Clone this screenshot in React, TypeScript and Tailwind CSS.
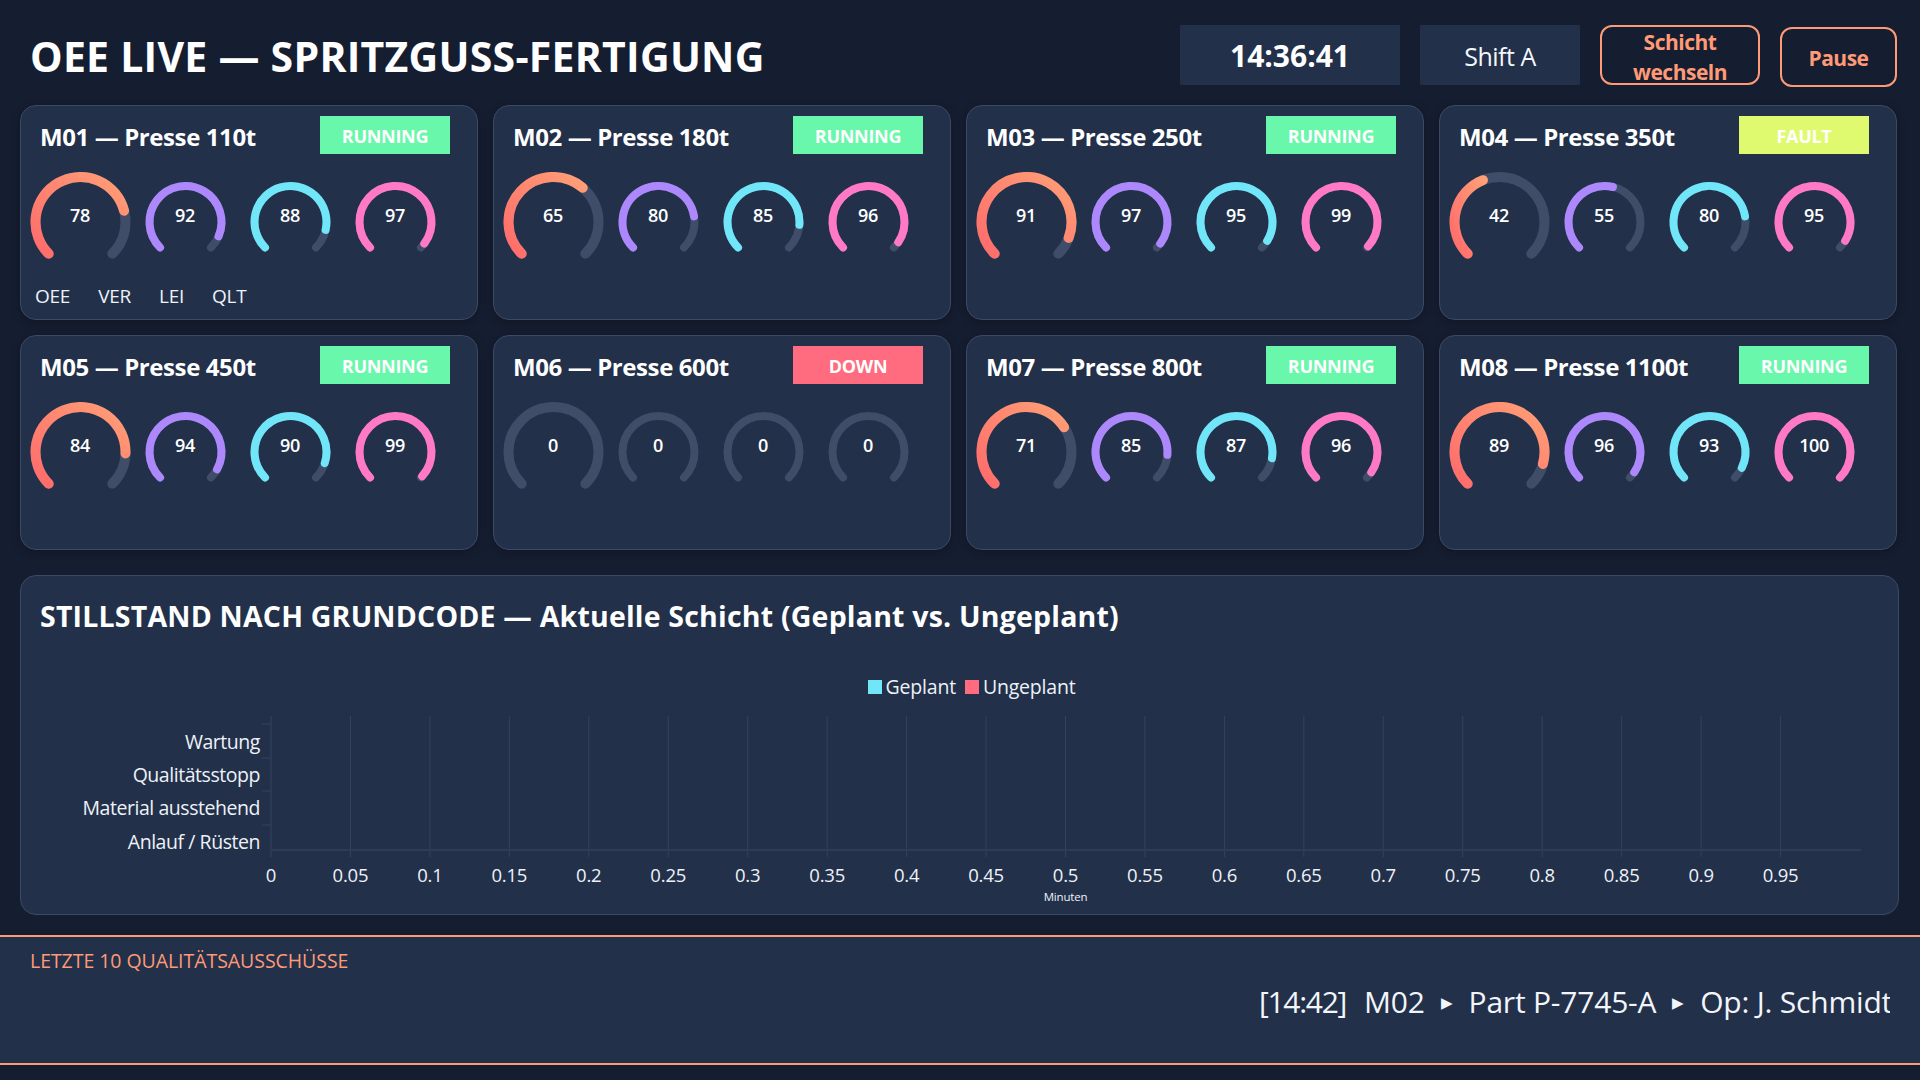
import React from "react";

type Status = "RUNNING" | "FAULT" | "DOWN";
interface Machine { name: string; status: Status; values: [number, number, number, number]; }

const machines: Machine[] = [
  { name: "M01 — Presse 110t", status: "RUNNING", values: [78, 92, 88, 97] },
  { name: "M02 — Presse 180t", status: "RUNNING", values: [65, 80, 85, 96] },
  { name: "M03 — Presse 250t", status: "RUNNING", values: [91, 97, 95, 99] },
  { name: "M04 — Presse 350t", status: "FAULT", values: [42, 55, 80, 95] },
  { name: "M05 — Presse 450t", status: "RUNNING", values: [84, 94, 90, 99] },
  { name: "M06 — Presse 600t", status: "DOWN", values: [0, 0, 0, 0] },
  { name: "M07 — Presse 800t", status: "RUNNING", values: [71, 85, 87, 96] },
  { name: "M08 — Presse 1100t", status: "RUNNING", values: [89, 96, 93, 100] },
];

const badgeClass: Record<Status, string> = {
  RUNNING: "bg-[#69f7ab]",
  FAULT: "bg-[#dffa6f]",
  DOWN: "bg-[#ff6b7f]",
};

const arc = (r: number, pct: number) => {
  const cx = 52.5;
  const cy = 50;
  const start = (225 * Math.PI) / 180;
  const end = ((225 - 270 * pct) * Math.PI) / 180;
  const x1 = cx + r * Math.cos(start);
  const y1 = cy - r * Math.sin(start);
  const x2 = cx + r * Math.cos(end);
  const y2 = cy - r * Math.sin(end);
  const large = 270 * pct > 180 ? 1 : 0;
  return `M ${x1} ${y1} A ${r} ${r} 0 ${large} 1 ${x2} ${y2}`;
};

function Gauge({ value, big, color, id }: { value: number; big?: boolean; color: string; id: string }) {
  const r = big ? 45 : 36;
  const sw = big ? 10 : 8;
  return (
    <svg width="105" height="100" viewBox="0 0 105 100" className="block shrink-0">
      {big && (
        <defs>
          <linearGradient id={id} x1="0" y1="1" x2="1" y2="0">
            <stop offset="0" stopColor="#ff6b6b" />
            <stop offset="1" stopColor="#ff9f76" />
          </linearGradient>
        </defs>
      )}
      <path d={arc(r, 1)} fill="none" stroke="#3f4d69" strokeWidth={sw} strokeLinecap="round" />
      {value > 0 && (
        <path d={arc(r, value / 100)} fill="none" stroke={big ? `url(#${id})` : color} strokeWidth={sw} strokeLinecap="round" />
      )}
      <text x="52" y="50" textAnchor="middle" fill="#ffffff" fontSize="18" fontWeight="600" letterSpacing="-0.4">
        {value}
      </text>
    </svg>
  );
}

function Card({ m, idx }: { m: Machine; idx: number }) {
  return (
    <div className="h-[215px] rounded-[16px] border border-[#3a4966] bg-[#22304a] pl-[19px] pr-[27px] pt-[10px] shadow-[0_2px_8px_rgba(0,0,0,0.25)]">
      <div className="flex h-[38px] items-start justify-between">
        <div className="pt-[5px] text-[24px] font-bold leading-[32px] tracking-[-0.4px] text-white">{m.name}</div>
        <div className={`flex h-[38px] w-[130px] items-center justify-center pt-[1px] text-[18px] font-bold leading-none tracking-[-0.3px] text-white ${badgeClass[m.status]}`}>
          {m.status}
        </div>
      </div>
      <div className="-ml-[12.5px] mt-[18px] flex">
        <Gauge value={m.values[0]} big color="" id={`oee-${idx}`} />
        <Gauge value={m.values[1]} color="#ad88fd" id="" />
        <Gauge value={m.values[2]} color="#70e6f8" id="" />
        <Gauge value={m.values[3]} color="#ff79c6" id="" />
      </div>
      {idx === 0 && (
        <div className="-ml-[5px] mt-[12px] flex gap-[28px] text-[19px] font-normal leading-[24px] tracking-[-0.25px] text-[#eef2f8]">
          <span>OEE</span>
          <span>VER</span>
          <span>LEI</span>
          <span>QLT</span>
        </div>
      )}
    </div>
  );
}

const xTicks = ["0", "0.05", "0.1", "0.15", "0.2", "0.25", "0.3", "0.35", "0.4", "0.45", "0.5", "0.55", "0.6", "0.65", "0.7", "0.75", "0.8", "0.85", "0.9", "0.95"];

function Chart() {
  const ox = 250;
  const step = 79.45;
  const top = 16;
  const axis = 150;
  const cats: [string, number][] = [["Wartung", 49], ["Qualitätsstopp", 82], ["Material ausstehend", 115], ["Anlauf / Rüsten", 149]];
  return (
    <svg width="1877" height="210" viewBox="0 0 1877 210" className="block">
      {xTicks.map((t, i) => (
        <g key={t}>
          <line x1={ox + i * step} x2={ox + i * step} y1={top} y2={axis + 7} stroke="#34425f" strokeWidth="1" />
          <text x={ox + i * step} y={182} textAnchor="middle" fontSize="18.5" fontWeight="400" letterSpacing="-0.2" fill="#eef2f8">{t}</text>
        </g>
      ))}
      <line x1={ox} x2={1840} y1={axis} y2={axis} stroke="#2f3c57" strokeWidth="2" />
      {[24, 58, 91, 125].map((y) => (
        <line key={y} x1={ox - 9} x2={ox} y1={y} y2={y} stroke="#34425f" strokeWidth="1" />
      ))}
      {cats.map(([c, y]) => (
        <text key={c} x={239} y={y} textAnchor="end" fontSize="19.5" fontWeight="400" letterSpacing="-0.45" fill="#eef2f8">{c}</text>
      ))}
      <text x={ox + 10 * step} y={201} textAnchor="middle" fontSize="11.5" fontWeight="400" letterSpacing="-0.2" fill="#eef2f8">Minuten</text>
    </svg>
  );
}

export default function App() {
  return (
    <div className="flex h-[1080px] w-[1920px] flex-col overflow-hidden bg-[#151d30] font-['Open_Sans',sans-serif] text-white">
      <header className="flex h-[105px] items-start justify-between pl-[30px] pr-[23px] pt-[25px]">
        <h1 className="mt-[5px] text-[41px] font-bold leading-[52px] tracking-[0.25px] text-white">OEE LIVE — SPRITZGUSS-FERTIGUNG</h1>
        <div className="flex items-start">
          <div className="flex h-[60px] w-[220px] items-center justify-center bg-[#22304a] pt-[1px] text-[30px] font-bold tracking-[0px]">14:36:41</div>
          <div className="ml-[20px] flex h-[60px] w-[160px] items-center justify-center bg-[#22304a] pt-[3px] text-[25px] font-normal tracking-[-0.5px] text-[#f5f7fb]">Shift A</div>
          <button className="ml-[20px] h-[60px] w-[160px] rounded-[12px] border-2 border-[#ff9a76] bg-transparent pb-[6px] text-[21px] font-bold leading-[30px] tracking-[-0.5px] text-[#ff9a76]">Schicht<br />wechseln</button>
          <button className="ml-[20px] mt-[2px] h-[60px] w-[117px] rounded-[12px] border-2 border-[#ff9a76] bg-transparent pt-[2px] text-[21px] font-bold leading-[30px] tracking-[-0.5px] text-[#ff9a76]">Pause</button>
        </div>
      </header>

      <section className="ml-[20px] grid w-[1877px] grid-cols-4 gap-[15px]">
        {machines.map((m, i) => <Card key={m.name} m={m} idx={i} />)}
      </section>

      <section className="ml-[20px] mt-[25px] h-[340px] w-[1879px] rounded-[16px] border border-[#3a4966] bg-[#22304a]">
        <h2 className="pl-[19px] pt-[20px] text-[28.5px] font-bold leading-[40px] tracking-[0.2px] text-white">STILLSTAND NACH GRUNDCODE — Aktuelle Schicht (Geplant vs. Ungeplant)</h2>
        <div className="mt-[37px] flex h-[27px] items-center justify-center pl-[24px] text-[19.5px] font-normal leading-none tracking-[-0.2px] text-[#eef2f8]">
          <span className="mr-[4px] h-[14px] w-[14px] bg-[#70e6f8]" />
          <span>Geplant</span>
          <span className="ml-[9px] mr-[4px] h-[14px] w-[14px] bg-[#ff6b7f]" />
          <span>Ungeplant</span>
        </div>
        <Chart />
      </section>

      <footer className="mt-[20px] h-[130px] border-y-2 border-[#ff9a76] bg-[#22304a] px-[30px]">
        <div className="pt-[11px] text-[19.5px] font-medium leading-[26px] tracking-[-0.05px] text-[#ff9a76]">LETZTE 10 QUALITÄTSAUSSCHÜSSE</div>
        <div className="mt-[8px] flex h-[40px] items-center gap-[16px] overflow-hidden whitespace-nowrap pl-[1229px] text-[30px] font-normal leading-[40px] tracking-[-0.2px] text-[#f2f5fa]">
          <span className="mr-[2px] shrink-0 tracking-[-1.3px]">[14:42]</span>
          <span className="shrink-0">M02</span>
          <span className="shrink-0 text-[15px]">▶</span>
          <span className="shrink-0">Part P-7745-A</span>
          <span className="shrink-0 text-[15px]">▶</span>
          <span className="shrink-0">Op: J. Schmidt</span>
        </div>
      </footer>
    </div>
  );
}
